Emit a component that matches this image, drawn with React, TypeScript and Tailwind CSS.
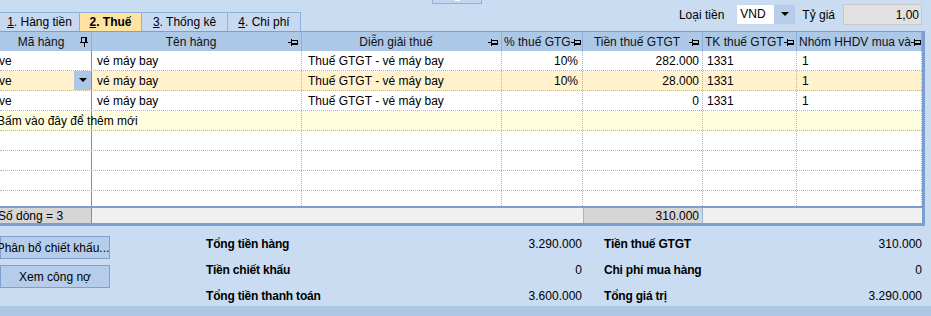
import React from "react";

const cols = [92, 210, 200, 81, 120, 94, 125];

function PinH() {
  return (
    <svg width="10" height="8" viewBox="0 0 10 8" className="shrink-0">
      <path d="M0 4.5H3.5M3.5 1V8M3.5 2.5H9.5V6.5H3.5" stroke="#000" strokeWidth="1" fill="none" shapeRendering="crispEdges" />
      <path d="M3.5 5.5H9" stroke="#000" strokeWidth="1" shapeRendering="crispEdges" />
    </svg>
  );
}

function PinV() {
  return (
    <svg width="8" height="10" viewBox="0 0 8 10" className="shrink-0">
      <path d="M1.5 0.5H6.5V5.5H1.5ZM0 5.5H8M4 5.5V10" stroke="#000" strokeWidth="1" fill="none" shapeRendering="crispEdges" />
      <path d="M5.5 1V5" stroke="#000" strokeWidth="1" shapeRendering="crispEdges" />
    </svg>
  );
}

function Caret() {
  return (
    <svg width="8" height="5" viewBox="0 0 8 5">
      <path d="M0 0H8L4 4Z" fill="#000" />
    </svg>
  );
}

type Row = { ma: string; ten: string; dien: string; pct: string; tien: string; tk: string; nhom: string; bg: string; sel?: boolean };

const rows: Row[] = [
  { ma: "ve", ten: "vé máy bay", dien: "Thuế GTGT - vé máy bay", pct: "10%", tien: "282.000", tk: "1331", nhom: "1", bg: "bg-white" },
  { ma: "ve", ten: "vé máy bay", dien: "Thuế GTGT - vé máy bay", pct: "10%", tien: "28.000", tk: "1331", nhom: "1", bg: "bg-[#fff2cd]", sel: true },
  { ma: "ve", ten: "vé máy bay", dien: "Thuế GTGT - vé máy bay", pct: "", tien: "0", tk: "1331", nhom: "1", bg: "bg-white" },
];

const dotR = "border-r border-dotted border-r-[#b4b4b4]";

function Tab({ n, label, active, w }: { n: string; label: string; active?: boolean; w: string }) {
  return (
    <div
      className={`${w} h-[19px] flex items-center justify-center border-t border-r border-[#8eb0dc] ${
        active ? "bg-[#ffe3a0] font-bold" : "bg-[#c6d9f0]"
      }`}
    >
      <span className="text-black">
        <span className="underline">{n}</span>. {label}
      </span>
    </div>
  );
}

export default function App() {
  return (
    <div
      className="relative w-[931px] h-[316px] overflow-hidden bg-[#cadcf1] text-[12px] leading-[14px] text-black"
      style={{ fontFamily: '"Liberation Sans", Arial, sans-serif' }}
    >
      {/* splitter handle */}
      <div className="absolute left-[432px] top-0 w-[50px] h-[4px] bg-[#c2d6ef] border border-t-0 border-[#8eb0dc] flex justify-center">
        <div className="w-[5px] h-[1px] bg-white" />
      </div>

      {/* top bar */}
      <div className="h-[31px] flex items-start">
        <div className="flex pt-[12px] border-[#8eb0dc]">
          <Tab n="1" label="Hàng tiền" w="w-[80px]" />
          <Tab n="2" label="Thuế" active w="w-[62px]" />
          <Tab n="3" label="Thống kê" w="w-[86px]" />
          <Tab n="4" label="Chi phí" w="w-[73px]" />
        </div>
        <div className="ml-auto mr-[9px] flex items-center pt-[4px] h-[25px]">
          <span className="mr-[12px]">Loại tiền</span>
          <div className="w-[60px] h-[21px] flex bg-white border border-[#c7d7ec]">
            <span className="flex-1 pl-[3px] pt-[2px]">VND</span>
            <div className="w-[21px] h-full bg-[#b6cdea] flex items-center justify-center">
              <Caret />
            </div>
          </div>
          <span className="ml-[6px] mr-[8px]">Tỷ giá</span>
          <div className="w-[79px] h-[21px] bg-[#e1e1e1] border border-[#c9c9c9] flex items-center justify-end pr-[2px]">
            1,00
          </div>
        </div>
      </div>

      {/* grid */}
      <div className="w-[925px] border-r-[3px] border-b-[3px] border-[#7d9fcf] bg-white">
        {/* header */}
        <div className="flex h-[20px] bg-[#adc7e6] border-t border-[#7d9fcf]">
          {[
            { t: "Mã hàng", pin: "v" },
            { t: "Tên hàng", pin: "h" },
            { t: "Diễn giải thuế", pin: "h" },
            { t: "% thuế GTG", pin: "h", left: true },
            { t: "Tiền thuế GTGT", pin: "h" },
            { t: "TK thuế GTGT", pin: "h", left: true },
            { t: "Nhóm HHDV mua và", pin: "h", left: true },
          ].map((c, i) => (
            <div
              key={i}
              style={{ width: cols[i] }}
              className="shrink-0 flex items-center border-r border-[#8eaedb] pl-[2px] pr-[3px] overflow-hidden whitespace-nowrap"
            >
              <span className={`flex-1 text-[#111] ${c.left ? "text-left" : "text-center"}`}>{c.t}</span>
              {c.pin === "v" ? <PinV /> : <PinH />}
            </div>
          ))}
        </div>

        {/* data rows */}
        {rows.map((r, ri) => (
          <div key={ri} className={`flex h-[20px] border-b border-dotted border-b-[#b4b4b4] ${r.bg}`}>
            <div style={{ width: cols[0] }} className="shrink-0 flex items-center border-r border-r-[#8c8c8c]">
              <span className="flex-1 -ml-[1px]">{r.ma}</span>
              {r.sel && (
                <div className="w-[17px] h-full bg-[#adc7e6] flex items-center justify-center">
                  <Caret />
                </div>
              )}
            </div>
            <div style={{ width: cols[1] }} className={`shrink-0 flex items-center pl-[5px] ${dotR}`}>{r.ten}</div>
            <div style={{ width: cols[2] }} className={`shrink-0 flex items-center pl-[6px] ${dotR}`}>{r.dien}</div>
            <div style={{ width: cols[3] }} className={`shrink-0 flex items-center justify-end pr-[4px] ${dotR}`}>{r.pct}</div>
            <div style={{ width: cols[4] }} className={`shrink-0 flex items-center justify-end pr-[3px] ${dotR}`}>{r.tien}</div>
            <div style={{ width: cols[5] }} className={`shrink-0 flex items-center pl-[4px] ${dotR}`}>{r.tk}</div>
            <div style={{ width: cols[6] }} className={`shrink-0 flex items-center pl-[5px] ${dotR}`}>{r.nhom}</div>
          </div>
        ))}

        {/* new row */}
        <div className="flex h-[20px] border-b border-dotted border-b-[#b4b4b4] bg-[#ffffe0]">
          <div style={{ width: cols[0] }} className="shrink-0 flex items-center border-r border-r-[#8c8c8c] overflow-visible whitespace-nowrap relative">
            <span className="-ml-[3px] relative z-10">Bấm vào đây để thêm mới</span>
          </div>
          {cols.slice(1).map((w, i) => (
            <div key={i} style={{ width: w }} className={`shrink-0 ${i === 0 ? "" : dotR} ${i === 0 ? "border-r border-dotted border-r-[#b4b4b4]" : ""}`} />
          ))}
        </div>

        {/* empty rows */}
        {[0, 1, 2, 3].map((k) => (
          <div
            key={k}
            className={`flex ${k === 3 ? "h-[15px]" : "h-[20px] border-b border-dotted border-b-[#b4b4b4]"} bg-white`}
          >
            <div style={{ width: cols[0] }} className="shrink-0 border-r border-r-[#8c8c8c]" />
            {cols.slice(1).map((w, i) => (
              <div key={i} style={{ width: w }} className={`shrink-0 ${dotR}`} />
            ))}
          </div>
        ))}

        {/* footer */}
        <div className="flex h-[17px] border-t-2 border-[#7d9fcf] bg-[#f0f0f0]">
          <div style={{ width: cols[0] }} className="shrink-0 flex items-center bg-[#d6d6d6] border-r border-r-[#8c8c8c] whitespace-nowrap">
            <span className="-ml-[2px]">Số dòng = 3</span>
          </div>
          <div style={{ width: cols[1] + cols[2] + cols[3] }} className="shrink-0" />
          <div style={{ width: cols[4] }} className="shrink-0 flex items-center justify-end pr-[3px] bg-[#d6d6d6] border-x border-[#9ab6dc]">
            310.000
          </div>
          <div className="flex-1" />
        </div>
      </div>

      {/* summary */}
      <div className="flex pt-[5px]">
        <div className="w-[110px] flex flex-col gap-[6px] pt-[5px]">
          <div className="h-[23px] bg-[#b5cdea] border border-[#7f9fcc] flex items-center justify-center whitespace-nowrap">
            <span className="-ml-[4px]">Phân bổ chiết khấu...</span>
          </div>
          <div className="h-[23px] bg-[#b5cdea] border border-[#7f9fcc] flex items-center justify-center">Xem công nợ</div>
        </div>
        <div className="ml-[96px] w-[376px] flex flex-col">
          {[
            ["Tổng tiền hàng", "3.290.000"],
            ["Tiền chiết khấu", "0"],
            ["Tổng tiền thanh toán", "3.600.000"],
          ].map(([l, v]) => (
            <div key={l} className="h-[26px] flex items-center">
              <span className="font-bold text-[12px] tracking-[-0.2px]">{l}</span>
              <span className="ml-auto">{v}</span>
            </div>
          ))}
        </div>
        <div className="ml-[22px] w-[318px] flex flex-col">
          {[
            ["Tiền thuế GTGT", "310.000"],
            ["Chi phí mua hàng", "0"],
            ["Tổng giá trị", "3.290.000"],
          ].map(([l, v]) => (
            <div key={l} className="h-[26px] flex items-center">
              <span className="font-bold text-[12px] tracking-[-0.2px]">{l}</span>
              <span className="ml-auto">{v}</span>
            </div>
          ))}
        </div>
      </div>

      {/* bottom strip */}
      <div className="absolute left-0 bottom-0 w-full h-[10px] bg-[#adc7e6]" />
    </div>
  );
}
